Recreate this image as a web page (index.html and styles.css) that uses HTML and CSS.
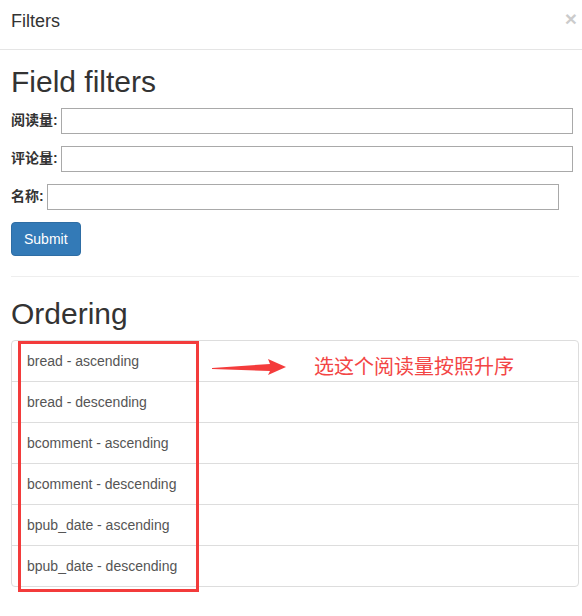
FILE: index.html
```html
<!DOCTYPE html>
<html lang="zh">
<head>
<meta charset="utf-8">
<title>Filters</title>
<link rel="stylesheet" href="styles.css">
</head>
<body>
<div class="modal">
  <div class="modal-header">
    <h4 class="modal-title">Filters</h4>
    <button class="close" type="button">×</button>
  </div>
  <div class="modal-body">
    <h2 class="section-title first">Field filters</h2>
    <form class="form">
      <div class="row"><label>阅读量:</label><input type="text"></div>
      <div class="row"><label>评论量:</label><input type="text"></div>
      <div class="row"><label>名称:</label><input type="text"></div>
      <button class="btn-primary" type="button">Submit</button>
    </form>
    <hr class="divider">
    <h2 class="section-title">Ordering</h2>
    <div class="ordering">
      <div class="list-group">
        <a class="list-group-item">bread - ascending</a>
        <a class="list-group-item">bread - descending</a>
        <a class="list-group-item">bcomment - ascending</a>
        <a class="list-group-item">bcomment - descending</a>
        <a class="list-group-item">bpub_date - ascending</a>
        <a class="list-group-item">bpub_date - descending</a>
      </div>
      <div class="mark-box"></div>
      <svg class="mark-arrow" width="80" height="22" viewBox="0 0 80 22">
        <polygon points="2,12 60,8 58,3 76,11 58,19 60,15 2,13" fill="#f43c3c"/>
      </svg>
      <div class="mark-text">选这个阅读量按照升序</div>
    </div>
  </div>
</div>
</body>
</html>
```
FILE: styles.css
```css
html, body {
  margin: 0;
  padding: 0;
  background: #fff;
}
body {
  font-family: "Liberation Sans", Arial, "Noto Sans CJK SC", sans-serif;
  font-size: 14px;
  line-height: 1.42857;
  color: #333;
}
.modal {
  width: 582px;
}
.modal-header {
  display: flex;
  justify-content: space-between;
  align-items: flex-start;
  padding: 8px 5px 15px 11px;
  border-bottom: 1px solid #e5e5e5;
}
.modal-title {
  margin: 0;
  font-size: 18px;
  font-weight: normal;
  line-height: 26px;
}
.close {
  margin: 0;
  padding: 0;
  border: 0;
  background: transparent;
  font-family: "Liberation Sans", Arial, sans-serif;
  font-size: 21px;
  font-weight: bold;
  line-height: 1;
  color: #000;
  opacity: 0.2;
}
.modal-body {
  padding: 15px 3px 0 11px;
}
.section-title {
  margin: 20px 0 10px;
  font-size: 30px;
  font-weight: 500;
  line-height: 33px;
  color: #333;
}
.section-title.first {
  margin-top: 0;
}
.form {
  display: flex;
  flex-direction: column;
  align-items: flex-start;
  gap: 12px;
}
.row {
  display: flex;
  align-items: center;
  gap: 3px;
  height: 26px;
}
.row label {
  font-weight: bold;
  color: #333;
  font-family: "Liberation Sans", Arial, "Noto Sans CJK SC", sans-serif;
}
.row input {
  box-sizing: border-box;
  width: 512px;
  height: 26px;
  margin: 0;
  border: 1px solid #a9a9a9;
  background: #fff;
  font-size: 14px;
}
.btn-primary {
  box-sizing: border-box;
  height: 34px;
  padding: 6px 12px;
  border: 1px solid #2e6da4;
  border-radius: 4px;
  background: #337ab7;
  color: #fff;
  font-family: "Liberation Sans", Arial, sans-serif;
  font-size: 14px;
  line-height: 20px;
}
.divider {
  margin: 20px 0 0;
  border: 0;
  border-top: 1px solid #eee;
  height: 0;
}
.ordering {
  position: relative;
  padding-bottom: 29px;
}
.list-group {
  display: flex;
  flex-direction: column;
  border-radius: 4px;
}
.list-group-item {
  display: block;
  padding: 10px 15px;
  margin-bottom: -1px;
  border: 1px solid #ddd;
  background: #fff;
  color: #555;
  line-height: 20px;
  text-decoration: none;
}
.list-group-item:first-child {
  border-top-left-radius: 4px;
  border-top-right-radius: 4px;
}
.list-group-item:last-child {
  margin-bottom: 0;
  border-bottom-left-radius: 4px;
  border-bottom-right-radius: 4px;
}
.mark-box {
  position: absolute;
  left: 7px;
  top: 1px;
  width: 181px;
  height: 251px;
  box-sizing: border-box;
  border: 3px solid #f33b3b;
}
.mark-arrow {
  position: absolute;
  left: 199px;
  top: 16px;
}
.mark-text {
  position: absolute;
  left: 303px;
  top: 14px;
  font-family: "Noto Sans CJK SC", sans-serif;
  font-size: 20px;
  line-height: 24px;
  color: #f34545;
  white-space: nowrap;
}
```
